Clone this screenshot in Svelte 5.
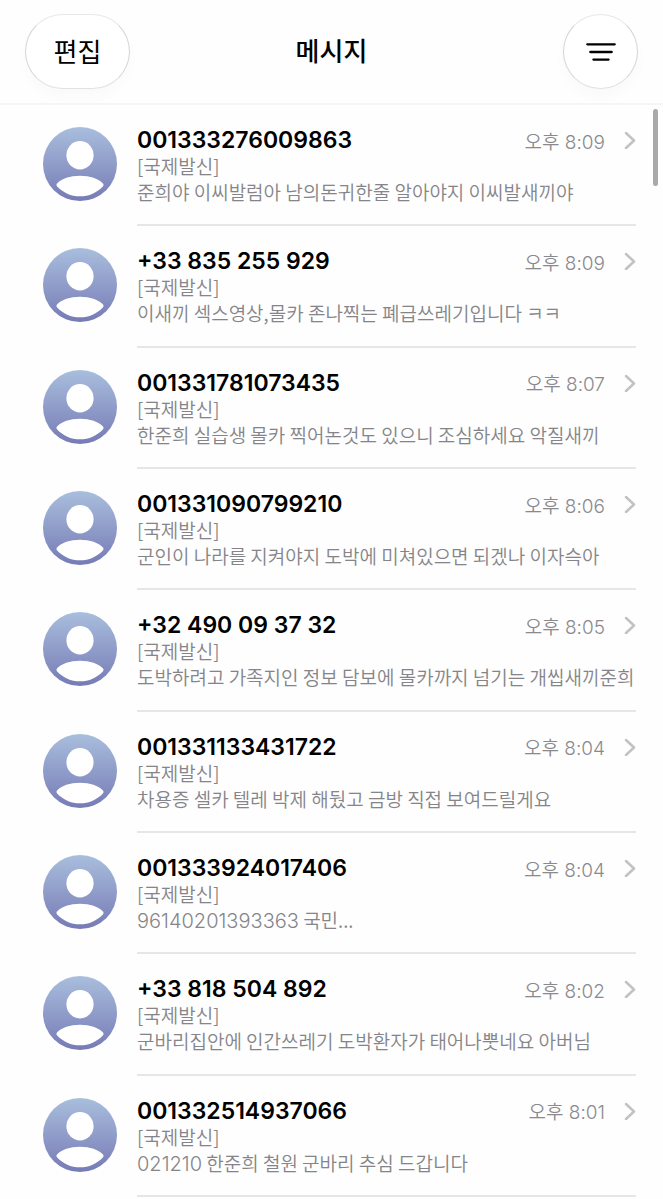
<script>
  const tag = '[국제발신]';
  const messages = [
    { from: '001333276009863', time: '오후 8:09', text: '준희야 이씨발럼아 남의돈귀한줄 알아야지 이씨발새끼야' },
    { from: '+33 835 255 929', time: '오후 8:09', text: '이새끼 섹스영상,몰카 존나찍는 폐급쓰레기입니다 ㅋㅋ' },
    { from: '001331781073435', time: '오후 8:07', text: '한준희 실습생 몰카 찍어논것도 있으니 조심하세요 악질새끼' },
    { from: '001331090799210', time: '오후 8:06', text: '군인이 나라를 지켜야지 도박에 미쳐있으면 되겠나 이자슥아' },
    { from: '+32 490 09 37 32', time: '오후 8:05', text: '도박하려고 가족지인 정보 담보에 몰카까지 넘기는 개씹새끼준희' },
    { from: '001331133431722', time: '오후 8:04', text: '차용증 셀카 텔레 박제 해뒀고 금방 직접 보여드릴게요' },
    { from: '001333924017406', time: '오후 8:04', number: '96140201393363', text: ' 국민...' },
    { from: '+33 818 504 892', time: '오후 8:02', text: '군바리집안에 인간쓰레기 도박환자가 태어나뿟네요 아버님' },
    { from: '001332514937066', time: '오후 8:01', number: '021210', text: ' 한준희 철원 군바리 추심 드갑니다' },
  ];
</script>

<svg class="defs" aria-hidden="true">
  <defs>
    <linearGradient id="avatar-fill" x1="0" y1="0" x2="0" y2="1">
      <stop offset="0" stop-color="#a9bedd" />
      <stop offset="1" stop-color="#767bb5" />
    </linearGradient>
  </defs>
</svg>

<div class="screen">
  <header>
    <button class="pill edit" type="button">편집</button>
    <h1>메시지</h1>
    <button class="pill filter" type="button" aria-label="필터">
      <svg width="32" height="22" viewBox="0 0 32 22" fill="none" stroke="#000" stroke-width="2.3" stroke-linecap="round">
        <path d="M2.3 3.3H29.700M5.300 11H26.700M8.400 18.600H23.600" />
      </svg>
    </button>
  </header>

  <ul>
    {#each messages as m}
      <li>
        <svg class="avatar" viewBox="0 0 74 74" aria-hidden="true">
          <circle cx="37" cy="37" r="37" fill="url(#avatar-fill)" />
          <ellipse cx="37" cy="28.3" rx="13.6" ry="14.2" fill="#fff" />
          <path d="M14 56.5C18.5 51.5 27 48.7 37 48.7S55.5 51.5 60 56.5C60.8 57.5 60.7 58.5 59.8 59.4C54 65.5 46 69.3 37 69.3S20 65.5 14.2 59.4C13.3 58.5 13.2 57.5 14 56.5Z" fill="#fff" />
        </svg>
        <a href="#message">
          <span class="top">
            <strong>{m.from}</strong>
            <time>{m.time}</time>
            <svg width="12" height="18" viewBox="0 0 12 18" fill="none" stroke="#c2c2c5" stroke-width="2.5" stroke-linecap="round" stroke-linejoin="round" aria-hidden="true">
              <path d="M2 2L10 9.5L2 17" />
            </svg>
          </span>
          <span class="line">{tag}</span>
          <span class="line">{#if m.number}<span class="digits">{m.number}</span>{/if}{m.text}</span>
        </a>
      </li>
    {/each}
  </ul>
  <div class="thumb"></div>
</div>

<style>
  :global(body) {
    margin: 0;
    background: #fff;
  }
  .defs {
    position: absolute;
    width: 0;
    height: 0;
  }
  .screen {
    position: relative;
    display: flex;
    flex-direction: column;
    box-sizing: border-box;
    min-height: 100vh;
    padding-bottom: 2px;
    color: #000;
    background: #fefefe;
    font-family: Inter, 'Noto Sans CJK KR', sans-serif;
  }
  header {
    display: grid;
    grid-template-columns: 1fr auto 1fr;
    align-items: center;
    padding: 14px 25px 14px;
    border-bottom: 2px solid #f5f5f6;
  }
  h1 {
    margin: 0;
    font-size: 26px;
    line-height: 36px;
    font-weight: 500;
  }
  .pill {
    display: flex;
    align-items: center;
    justify-content: center;
    box-sizing: border-box;
    height: 75px;
    padding: 0;
    border: 1px solid #d4d4d5;
    border-top-color: #e8e8e9;
    border-bottom-color: #e2e2e3;
    border-radius: 38px;
    background: #fff;
    box-shadow: 0 8px 14px rgba(0, 0, 0, 0.02);
    color: #000;
    font: 400 26px/34px 'Noto Sans CJK KR', sans-serif;
  }
  .edit {
    width: 105px;
    padding-bottom: 2px;
  }
  .filter {
    width: 75px;
    justify-self: end;
  }
  ul {
    flex: 1;
    display: grid;
    grid-auto-rows: 1fr;
    margin: 0;
    padding: 0 27px 0 43px;
    list-style: none;
  }
  li {
    display: flex;
    gap: 20px;
  }
  .avatar {
    flex: none;
    width: 74px;
    height: 74px;
    margin-top: 22px;
  }
  a {
    flex: 1;
    min-width: 0;
    padding: 22px 0 18px;
    border-bottom: 2px solid #e6e6e7;
    color: inherit;
    text-decoration: none;
  }
  .top {
    display: flex;
    align-items: center;
    height: 26px;
  }
  strong {
    flex: 1;
    font-size: 23px;
    font-weight: 600;
  }
  time {
    margin-right: 19px;
    color: #8a8a8e;
    font-size: 19px;
    font-weight: 350;
  }
  .line {
    display: block;
    height: 26px;
    color: #858589;
    font-family: 'Noto Sans CJK KR', sans-serif;
    font-size: 19px;
    font-weight: 350;
    line-height: 26px;
    white-space: nowrap;
  }
  .digits {
    font-family: Inter, sans-serif;
    font-size: 20px;
  }
  .thumb {
    position: absolute;
    top: 109px;
    right: 5px;
    width: 5px;
    height: 77px;
    border-radius: 3px;
    background: #a9a9a9;
  }
</style>
